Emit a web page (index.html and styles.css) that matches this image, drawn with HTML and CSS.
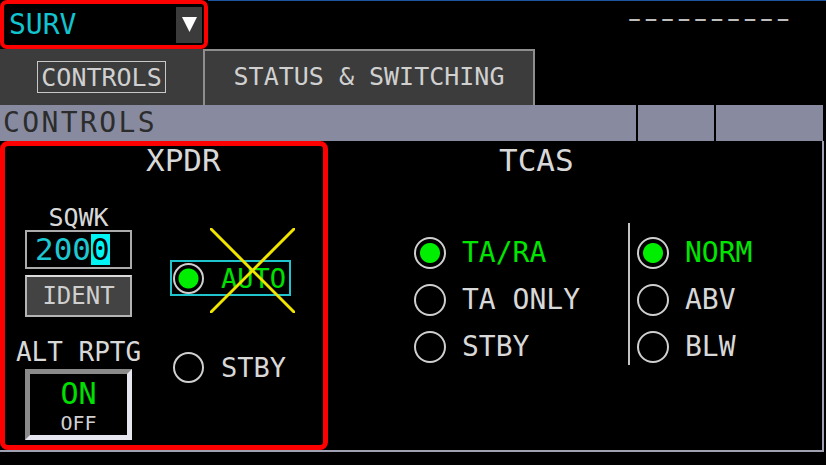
FILE: index.html
```html
<!DOCTYPE html>
<html lang="en">
<head>
<meta charset="utf-8">
<title>SURV Controls</title>
<link rel="stylesheet" href="styles.css">
</head>
<body>
<div class="screen">
  <header class="top">
    <div class="dropdown hl">
      <span class="drop-value">SURV</span>
      <span class="drop-btn"><svg width="15" height="15" viewBox="0 0 15 15"><polygon points="0,0 15,0 7.5,15" fill="#ffffff"/></svg></span>
    </div>
    <div class="top-rest">
      <span class="dashes">––––––––––</span>
    </div>
  </header>

  <nav class="tabs">
    <div class="tab active"><span class="tab-label">CONTROLS</span></div>
    <div class="tab other">STATUS &amp; SWITCHING</div>
  </nav>

  <div class="bar">
    <div class="bar-cell bar-main">CONTROLS</div>
    <div class="bar-cell bar-mid"></div>
    <div class="bar-cell bar-end"></div>
  </div>

  <main class="panel">
    <section class="xpdr hl">
      <h2 class="title">XPDR</h2>
      <div class="xpdr-body">
        <div class="xpdr-left">
          <div class="label sqwk-label">SQWK</div>
          <div class="sqwk">200<span class="cursor">0</span></div>
          <div class="ident">IDENT</div>
          <div class="label alt-label">ALT RPTG</div>
          <div class="altsw">
            <span class="on">ON</span>
            <span class="off">OFF</span>
          </div>
        </div>
        <div class="xpdr-right">
          <div class="auto">
            <span class="radio on-dot"></span>
            <span class="auto-label">AUTO</span>
          </div>
          <div class="xopt">
            <span class="radio"></span>
            <span>STBY</span>
          </div>
          <svg class="xmark" width="85" height="85" viewBox="0 0 85 85">
            <line x1="0" y1="0" x2="85" y2="85" stroke="#f0e400" stroke-width="3"/>
            <line x1="85" y1="0" x2="0" y2="85" stroke="#f0e400" stroke-width="3"/>
          </svg>
        </div>
      </div>
    </section>

    <section class="tcas">
      <h2 class="title">TCAS</h2>
      <div class="tcas-body">
        <div class="tcas-col left">
          <div class="opt sel"><span class="radio on-dot"></span><span>TA/RA</span></div>
          <div class="opt"><span class="radio"></span><span>TA ONLY</span></div>
          <div class="opt"><span class="radio"></span><span>STBY</span></div>
        </div>
        <div class="sep"></div>
        <div class="tcas-col right">
          <div class="opt sel"><span class="radio on-dot"></span><span>NORM</span></div>
          <div class="opt"><span class="radio"></span><span>ABV</span></div>
          <div class="opt"><span class="radio"></span><span>BLW</span></div>
        </div>
      </div>
    </section>
  </main>
</div>
</body>
</html>
```

FILE: styles.css
```css
html, body {
  margin: 0;
  padding: 0;
  background: #000;
}

.screen {
  width: 826px;
  height: 465px;
  overflow: hidden;
  background: #000;
  font-family: "DejaVu Sans Mono", monospace;
  color: #d8d8d8;
}

/* red highlight frames */
.hl {
  position: relative;
}
.hl::after {
  content: "";
  position: absolute;
  inset: 0;
  border: 4px solid #ff0000;
  border-radius: 7px;
  pointer-events: none;
}

/* top row */
.top {
  display: flex;
  height: 49px;
}
.dropdown {
  width: 208px;
  box-sizing: border-box;
  display: flex;
  align-items: center;
  justify-content: space-between;
  padding: 0 6px 0 9px;
}
.drop-value {
  font-size: 28px;
  line-height: 28px;
  color: #12c4d0;
}
.drop-btn {
  width: 26px;
  height: 36px;
  background: #3b3b3b;
  display: flex;
  align-items: center;
  justify-content: center;
}
.top-rest {
  flex: 1;
  border-top: 1px solid #1d55a0;
  padding: 4px 0 0 420px;
}
.dashes {
  display: block;
  font-family: "DejaVu Sans", sans-serif;
  font-size: 26px;
  line-height: 26px;
  letter-spacing: 3.5px;
  color: #bdbdbd;
}

/* tabs */
.tabs {
  display: flex;
  height: 56px;
}
.tab {
  background: #3c3c3c;
  box-sizing: border-box;
  display: flex;
  align-items: center;
  justify-content: center;
  font-size: 25px;
  line-height: 25px;
  color: #d0d0d0;
}
.tab.active {
  width: 203px;
}
.tab.other {
  width: 332px;
  border: 2px solid #8e8e8e;
  border-bottom: none;
  padding-bottom: 3px;
}
.tab-label {
  width: 129px;
  height: 32px;
  box-sizing: border-box;
  border: 1px solid #c8c8c8;
  display: flex;
  align-items: center;
  justify-content: center;
}

/* section bar */
.bar {
  display: flex;
  gap: 2px;
  width: 823px;
  height: 36px;
}
.bar-cell {
  background: #888b9f;
}
.bar-main {
  width: 636px;
  box-sizing: border-box;
  padding-left: 3px;
  display: flex;
  align-items: center;
  font-size: 28px;
  line-height: 28px;
  letter-spacing: 2.4px;
  color: #2c2c2c;
}
.bar-mid {
  width: 76px;
}
.bar-end {
  flex: 1;
}

/* main panel */
.panel {
  display: flex;
  width: 824px;
  height: 311px;
  box-sizing: border-box;
  border-right: 2px solid #a0a2b2;
  border-bottom: 2px solid #a0a2b2;
}
.title {
  margin: 0;
  padding-top: 4px;
  font-size: 31px;
  line-height: 31px;
  font-weight: normal;
  color: #d8d8d8;
}

/* XPDR */
.xpdr {
  width: 328px;
  flex: none;
}
.xpdr.hl::after {
  border-width: 5px;
  border-radius: 8px;
}
.xpdr .title {
  padding-left: 146px;
}
.xpdr-body {
  display: flex;
}
.xpdr-left {
  margin-left: 25px;
  width: 107px;
  display: flex;
  flex-direction: column;
  align-items: center;
}
.label {
  white-space: nowrap;
  color: #d8d8d8;
}
.sqwk-label {
  margin-top: 29px;
  font-size: 25px;
  line-height: 25px;
}
.sqwk {
  width: 107px;
  height: 39px;
  box-sizing: border-box;
  border: 2px solid #ababab;
  display: flex;
  align-items: center;
  padding-left: 8px;
  font-size: 31px;
  line-height: 31px;
  color: #1ec8d2;
}
.cursor {
  background: #00f4f4;
  color: #000;
}
.ident {
  margin-top: 6px;
  width: 107px;
  height: 42px;
  box-sizing: border-box;
  background: #434343;
  border: 2px solid #b4b4b4;
  border-top-color: #dcdcdc;
  display: flex;
  align-items: center;
  justify-content: center;
  font-size: 24px;
  line-height: 24px;
  color: #cfcfcf;
}
.alt-label {
  margin-top: 22px;
  font-size: 26px;
  line-height: 26px;
}
.altsw {
  margin-top: 4px;
  width: 107px;
  height: 71px;
  box-sizing: border-box;
  border: 5px solid;
  border-color: #8a8a8a #e6e6f0 #e6e6f0 #8a8a8a;
  display: flex;
  flex-direction: column;
  align-items: center;
  padding-top: 2px;
}
.on {
  font-size: 30px;
  line-height: normal;
  color: #00e000;
}
.off {
  font-size: 20px;
  line-height: normal;
  color: #d0d0d0;
}

.xpdr-right {
  position: relative;
  margin-left: 38px;
  width: 121px;
}
.radio {
  flex: none;
  width: 31px;
  height: 31px;
  box-sizing: border-box;
  border: 2px solid #cfcfcf;
  border-radius: 50%;
}
.radio.on-dot {
  background: radial-gradient(circle, #00ee00 0 9.5px, transparent 10.5px);
}
.auto {
  margin-top: 84px;
  width: 121px;
  height: 36px;
  box-sizing: border-box;
  border: 2px solid #20c4cc;
  display: flex;
  align-items: center;
  gap: 17px;
  padding-left: 1px;
  font-size: 27px;
  line-height: 27px;
}
.auto-label {
  color: #00e000;
}
.xopt {
  margin-top: 56px;
  padding-left: 3px;
  display: flex;
  align-items: center;
  gap: 17px;
  font-size: 27px;
  line-height: 27px;
}
.xmark {
  position: absolute;
  left: 40px;
  top: 52px;
}

/* TCAS */
.tcas {
  flex: 1;
}
.tcas .title {
  padding-left: 171px;
}
.tcas-body {
  display: flex;
  margin-top: 47px;
  padding-left: 86px;
}
.tcas-col {
  display: flex;
  flex-direction: column;
  gap: 15px;
  padding-top: 14px;
}
.tcas-col.left {
  width: 214px;
}
.tcas-col.right {
  margin-left: 7px;
}
.sep {
  width: 2px;
  height: 142px;
  background: #c4c4c4;
}
.opt {
  display: flex;
  align-items: center;
  gap: 16px;
  font-size: 28px;
  line-height: 32px;
  white-space: nowrap;
  color: #d8d8d8;
}
.opt .radio {
  width: 32px;
  height: 32px;
}
.opt.sel {
  color: #00e600;
}
```
